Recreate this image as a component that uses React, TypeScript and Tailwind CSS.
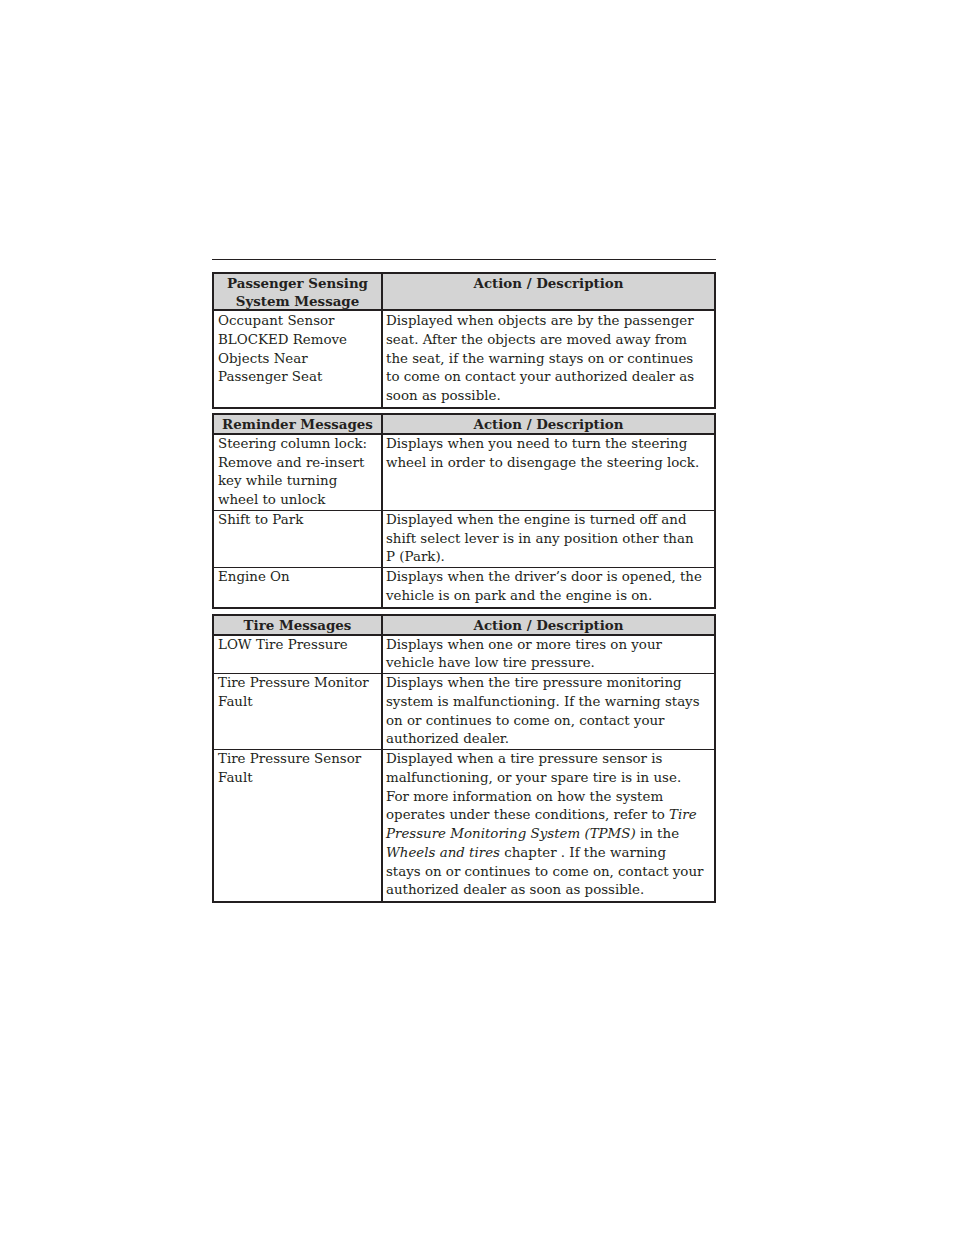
import React from "react";

type Row = { left: React.ReactNode; right: React.ReactNode; pad?: string };

const serif = { fontFamily: '"DejaVu Serif", "Liberation Serif", serif' };

function Lines({ lines }: { lines: React.ReactNode[] }) {
  return (
    <>
      {lines.map((l, i) => (
        <div key={i} className="whitespace-nowrap">
          {l}
        </div>
      ))}
    </>
  );
}

function MessageTable({
  head,
  headClass,
  rows,
  className = "",
}: {
  head: React.ReactNode;
  headClass: string;
  rows: Row[];
  className?: string;
}) {
  return (
    <div className={`w-[504px] border-2 border-[#231f20] ${className}`}>
      <div className={`grid grid-cols-[169px_1fr] bg-[#d4d4d4] border-b-2 border-[#231f20] ${headClass}`}>
        <div className="border-r-2 border-[#231f20] text-center font-bold leading-[18px]">{head}</div>
        <div className="text-center font-bold leading-[18px]">Action / Description</div>
      </div>
      {rows.map((r, i) => (
        <div
          key={i}
          className={`grid grid-cols-[169px_1fr] ${i > 0 ? "border-t border-[#231f20]" : ""}`}
        >
          <div className={`border-r-2 border-[#231f20] pl-[4px] ${r.pad ?? ""}`}>{r.left}</div>
          <div className={`pl-[3px] ${r.pad ?? ""}`}>{r.right}</div>
        </div>
      ))}
    </div>
  );
}

export default function App() {
  return (
    <div
      className="min-h-[1235px] bg-white pl-[212px] pt-[259px] text-[13.4px] leading-[18.75px] text-[#231f20]"
      style={serif}
    >
      <div className="w-[504px] border-t border-[#231f20]" />

      <MessageTable
        className="mt-[12px]"
        headClass="h-[37px]"
        head={
          <div>
            Passenger Sensing
            <br />
            System Message
          </div>
        }
        rows={[
          {
            pad: "pt-[1px] pb-[1px]",
            left: (
              <Lines
                lines={["Occupant Sensor", "BLOCKED Remove", "Objects Near", "Passenger Seat"]}
              />
            ),
            right: (
              <Lines
                lines={[
                  "Displayed when objects are by the passenger",
                  "seat. After the objects are moved away from",
                  "the seat, if the warning stays on or continues",
                  "to come on contact your authorized dealer as",
                  "soon as possible.",
                ]}
              />
            ),
          },
        ]}
      />

      <MessageTable
        className="mt-[4px]"
        headClass="h-[20px] items-center"
        head="Reminder Messages"
        rows={[
          {
            left: (
              <Lines
                lines={[
                  "Steering column lock:",
                  "Remove and re-insert",
                  "key while turning",
                  "wheel to unlock",
                ]}
              />
            ),
            right: (
              <Lines
                lines={[
                  "Displays when you need to turn the steering",
                  "wheel in order to disengage the steering lock.",
                ]}
              />
            ),
          },
          {
            left: <Lines lines={["Shift to Park"]} />,
            right: (
              <Lines
                lines={[
                  "Displayed when the engine is turned off and",
                  "shift select lever is in any position other than",
                  "P (Park).",
                ]}
              />
            ),
          },
          {
            pad: "pb-[1px]",
            left: <Lines lines={["Engine On"]} />,
            right: (
              <Lines
                lines={[
                  "Displays when the driver\u2019s door is opened, the",
                  "vehicle is on park and the engine is on.",
                ]}
              />
            ),
          },
        ]}
      />

      <MessageTable
        className="mt-[5px]"
        headClass="h-[20px] items-center"
        head="Tire Messages"
        rows={[
          {
            left: <Lines lines={["LOW Tire Pressure"]} />,
            right: (
              <Lines
                lines={[
                  "Displays when one or more tires on your",
                  "vehicle have low tire pressure.",
                ]}
              />
            ),
          },
          {
            left: <Lines lines={["Tire Pressure Monitor", "Fault"]} />,
            right: (
              <Lines
                lines={[
                  "Displays when the tire pressure monitoring",
                  "system is malfunctioning. If the warning stays",
                  "on or continues to come on, contact your",
                  "authorized dealer.",
                ]}
              />
            ),
          },
          {
            pad: "pb-[1px]",
            left: <Lines lines={["Tire Pressure Sensor", "Fault"]} />,
            right: (
              <Lines
                lines={[
                  "Displayed when a tire pressure sensor is",
                  "malfunctioning, or your spare tire is in use.",
                  "For more information on how the system",
                  <>
                    operates under these conditions, refer to <i>Tire</i>
                  </>,
                  <>
                    <i>Pressure Monitoring System (TPMS)</i> in the
                  </>,
                  <>
                    <i>Wheels and tires</i> chapter . If the warning
                  </>,
                  "stays on or continues to come on, contact your",
                  "authorized dealer as soon as possible.",
                ]}
              />
            ),
          },
        ]}
      />
    </div>
  );
}
